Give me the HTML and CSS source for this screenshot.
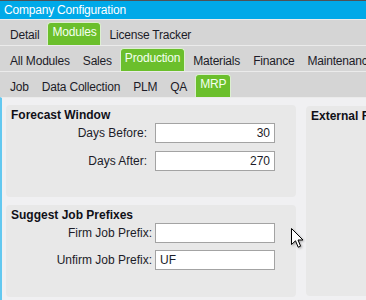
FILE: index.html
```html
<!DOCTYPE HTML>
<html lang="en">
<head>
<meta charset="UTF-8">
<title>Company Configuration</title>
<link rel="stylesheet" href="styles.css">
</head>

<body>
<div class="window">
    <div class="titlebar">Company Configuration</div>

    <div class="tabrow">
        <span class="tab">Detail</span>
        <span class="tab active">Modules</span>
        <span class="tab">License Tracker</span>
    </div>
    <div class="tabrow">
        <span class="tab">All Modules</span>
        <span class="tab">Sales</span>
        <span class="tab active">Production</span>
        <span class="tab">Materials</span>
        <span class="tab">Finance</span>
        <span class="tab">Maintenance</span>
    </div>
    <div class="tabrow">
        <span class="tab">Job</span>
        <span class="tab">Data Collection</span>
        <span class="tab">PLM</span>
        <span class="tab">QA</span>
        <span class="tab active">MRP</span>
    </div>

    <div class="content">
        <div class="leftcol">
            <div class="panel">
                <div class="panel-title">Forecast Window</div>
                <div class="form">
                    <label>Days Before:</label>
                    <input class="field num" type="text" value="30">
                    <label>Days After:</label>
                    <input class="field num" type="text" value="270">
                </div>
            </div>
            <div class="panel">
                <div class="panel-title">Suggest Job Prefixes</div>
                <div class="form wide">
                    <label>Firm Job Prefix:</label>
                    <input class="field" type="text" value="">
                    <label>Unfirm Job Prefix:</label>
                    <input class="field" type="text" value="UF">
                </div>
            </div>
        </div>
        <div class="panel external">
            <div class="panel-title">External Forecast</div>
        </div>
    </div>

    <!-- mouse pointer -->
    <svg class="cursor" width="14" height="22" viewBox="0 0 14 22">
        <polygon points="0.5,0.5 0.5,16.5 4.5,12.8 7.2,19.2 9.6,18.2 7,12 12,12" fill="#fff" stroke="#000" stroke-width="1" stroke-linejoin="round"/>
    </svg>
</div>
</body>
</html>
```

FILE: styles.css
```css
body {
    margin: 0;
    background-color: #f0f0f2;
    font-family: "Liberation Sans", Arial, sans-serif;
    font-size: 12px;
    color: #1c1c28;
    overflow: hidden;
}

.window {
    position: relative;
    width: 366px;
    height: 300px;
    overflow: hidden;
}

/* blue title strip */
.titlebar {
    height: 18px;
    line-height: 18px;
    padding-left: 4px;
    border-top: 1px solid #4e5256;
    background-color: #00a9e8;
    color: #ffffff;
    letter-spacing: -0.2px;
}

/* tab strips */
.tabrow {
    display: flex;
    gap: 3px;
    height: 25px;
    padding-left: 5px;
    border-top: 1px solid #ebebeb;
    background-color: #d5d5d5;
    white-space: nowrap;
    letter-spacing: -0.2px;
}

.tab {
    box-sizing: border-box;
    height: 23px;
    margin-top: 2px;
    padding: 5px 4px 0;
    line-height: 14px;
    border: 1px solid transparent;
    border-bottom: none;
    border-radius: 4px 4px 0 0;
    color: #1c1c28;
}

.tab.active {
    padding-top: 2px;
    background-color: #6bbf2c;
    border-color: #dcefd0;
    color: #f4fff0;
}

/* page body */
.content {
    display: flex;
    gap: 10px;
    height: 202px;
    padding: 7px 0 0 4px;
    border-top: 1px solid #ebebeb;
    border-left: 2px solid #62c8f0;
}

.leftcol {
    display: flex;
    flex-direction: column;
    gap: 8px;
    width: 290px;
    flex-shrink: 0;
}

.panel {
    box-sizing: border-box;
    height: 92px;
    padding: 3px 5px;
    background-color: #e8e8e8;
    border-radius: 4px;
}

.panel.external {
    width: 200px;
    height: 190px;
    flex-shrink: 0;
    margin-top: 1px;
}

.panel-title {
    font-weight: bold;
    line-height: 14px;
    color: #101018;
}

.form {
    display: grid;
    grid-template-columns: 136px 120px;
    column-gap: 8px;
    row-gap: 8px;
    margin-top: 1px;
}

.form.wide {
    grid-template-columns: 141px 120px;
    column-gap: 3px;
    row-gap: 7px;
}

.form label {
    align-self: center;
    text-align: right;
    white-space: nowrap;
    color: #1c1c28;
}

.field {
    box-sizing: border-box;
    width: 120px;
    height: 20px;
    margin: 0;
    padding: 0 4px;
    border: 1px solid #a3a3a3;
    background-color: #ffffff;
    font-family: "Liberation Sans", Arial, sans-serif;
    font-size: 12px;
    color: #1c1c28;
    outline: none;
}

.field.num {
    text-align: right;
}

.cursor {
    position: absolute;
    left: 291px;
    top: 228px;
    filter: drop-shadow(1px 1px 1px rgba(0, 0, 0, 0.3));
}
```
